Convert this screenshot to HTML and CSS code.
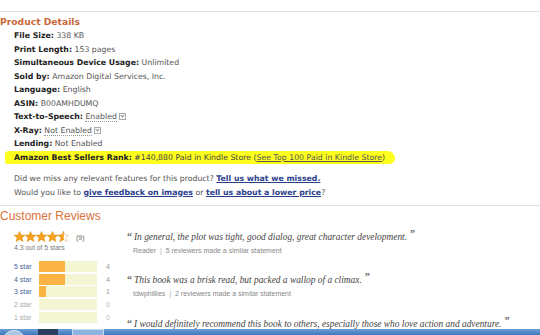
FILE: index.html
```html
<!DOCTYPE html>
<html lang="en">
<head>
    <meta charset="UTF-8">
    <title>Product Details</title>
    <link rel="stylesheet" href="styles.css">
</head>
<body>
    <div class="page">
        <div class="rule"></div>
        <h2 class="heading">Product Details</h2>
        <ul class="details">
            <li><b>File Size:</b> 338 KB</li>
            <li><b>Print Length:</b> 153 pages</li>
            <li><b>Simultaneous Device Usage:</b> Unlimited</li>
            <li><b>Sold by:</b> Amazon Digital Services, Inc.</li>
            <li><b>Language:</b> English</li>
            <li><b>ASIN:</b> B00AMHDUMQ</li>
            <li><b>Text-to-Speech:</b> <span class="dotted">Enabled</span> <span class="pop"></span></li>
            <li><b>X-Ray:</b> <span class="dotted">Not Enabled</span> <span class="pop"></span></li>
            <li><b>Lending:</b> Not Enabled</li>
            <li class="rank"><span class="marker"><b>Amazon Best Sellers Rank:</b> #140,880 Paid in Kindle Store (<a href="#">See Top 100 Paid in Kindle Store</a>)</span></li>
        </ul>
        <div class="feedback">
            <p>Did we miss any relevant features for this product? <a class="strong" href="#">Tell us what we missed.</a></p>
            <p>Would you like to <a class="strong" href="#">give feedback on images</a> or <a class="strong" href="#">tell us about a lower price</a>?</p>
        </div>
        <div class="rule rule-mid"></div>
        <h2 class="heading heading-big">Customer Reviews</h2>
        <div class="reviews">
            <div class="summary">
                <div class="stars-line">
                    <svg class="stars" width="58" height="12" viewBox="0 0 58 12">
                        <defs>
                            <path id="st" d="M5.5 0.4 L7 4 L10.9 4.2 L7.9 6.7 L8.9 10.6 L5.5 8.4 L2.1 10.6 L3.1 6.7 L0.1 4.2 L4 4 Z"/>
                            <clipPath id="half"><rect x="0" y="0" width="5.8" height="12"/></clipPath>
                        </defs>
                        <use href="#st" x="0" fill="#f5a21e" stroke="#d98500" stroke-width="0.5"/>
                        <use href="#st" x="11" fill="#f5a21e" stroke="#d98500" stroke-width="0.5"/>
                        <use href="#st" x="22" fill="#f5a21e" stroke="#d98500" stroke-width="0.5"/>
                        <use href="#st" x="33" fill="#f5a21e" stroke="#d98500" stroke-width="0.5"/>
                        <g transform="translate(44 0)">
                            <use href="#st" fill="#fff" stroke="#d9b070" stroke-width="0.5"/>
                            <use href="#st" fill="#f5a21e" stroke="#d98500" stroke-width="0.5" clip-path="url(#half)"/>
                        </g>
                    </svg>
                    <span class="count">(9)</span>
                </div>
                <div class="avg">4.3 out of 5 stars</div>
                <div class="histogram">
                    <div class="hrow"><span class="hlabel">5 star</span><span class="bar"><span class="fill" style="width: 44%"></span></span><span class="hnum">4</span></div>
                    <div class="hrow"><span class="hlabel">4 star</span><span class="bar"><span class="fill" style="width: 44%"></span></span><span class="hnum">4</span></div>
                    <div class="hrow"><span class="hlabel">3 star</span><span class="bar"><span class="fill" style="width: 12%"></span></span><span class="hnum">1</span></div>
                    <div class="hrow off"><span class="hlabel">2 star</span><span class="bar"></span><span class="hnum">0</span></div>
                    <div class="hrow off"><span class="hlabel">1 star</span><span class="bar"></span><span class="hnum">0</span></div>
                </div>
            </div>
            <div class="quotes">
                <div class="quote">
                    <p class="qtext"><span class="qmark">&ldquo;</span>In general, the plot was tight, good dialog, great character development.<span class="qmark qend">&rdquo;</span></p>
                    <p class="byline">Reader <span class="sep">|</span> 5 reviewers made a similar statement</p>
                </div>
                <div class="quote">
                    <p class="qtext"><span class="qmark">&ldquo;</span>This book was a brisk read, but packed a wallop of a climax.<span class="qmark qend">&rdquo;</span></p>
                    <p class="byline">tdwphillies <span class="sep">|</span> 2 reviewers made a similar statement</p>
                </div>
                <div class="quote">
                    <p class="qtext"><span class="qmark">&ldquo;</span>I would definitely recommend this book to others, especially those who love action and adventure.<span class="qmark qend">&rdquo;</span></p>
                </div>
            </div>
        </div>
    </div>
    <div class="taskbar">
        <span class="orb"></span>
        <span class="task task-dark"></span>
        <span class="task task-light"></span>
    </div>
</body>
</html>
```

FILE: styles.css
```css
body {
    margin: 0;
    background: #fff;
    font-family: "DejaVu Sans", Verdana, sans-serif;
    color: #555;
}
.page {
    padding-top: 11px;
}
.rule {
    border-top: 1px solid #e2e2e2;
}
.heading {
    margin: 3px 0 0;
    font-size: 9.2px;
    line-height: 14px;
    font-weight: bold;
    color: #c8683a;
}
.heading-big {
    margin-top: 2px;
    font-family: "Liberation Sans", Arial, sans-serif;
    font-weight: normal;
    font-size: 12px;
    line-height: 16px;
    color: #d7733a;
}
.details {
    list-style: none;
    margin: 0;
    padding: 0 0 0 14px;
    font-size: 7.8px;
    line-height: 13.5px;
}
.details b {
    color: #222;
}
.dotted {
    border-bottom: 1px dotted #999;
}
.pop {
    display: inline-block;
    width: 5px;
    height: 5px;
    border: 1px solid #aaa;
    vertical-align: -1px;
    position: relative;
}
.pop::after {
    content: "";
    position: absolute;
    left: 1px;
    top: 0;
    width: 2px;
    height: 2px;
    border-right: 1px solid #888;
    border-bottom: 1px solid #888;
    transform: rotate(45deg);
}
.marker {
    margin-left: -9px;
    padding: 2px 10px 2px 9px;
    background: #ffff1e;
    border-radius: 4px 8px 6px 3px;
    color: #444;
}
.marker a {
    color: #555;
}
.feedback {
    margin-top: 8px;
    padding-left: 14px;
    font-size: 7.8px;
    line-height: 13.7px;
}
.feedback p {
    margin: 0;
}
.strong {
    color: #2b3e8c;
    font-weight: bold;
}
.rule-mid {
    margin-top: 6px;
}
.reviews {
    display: flex;
    padding-left: 14px;
}
.summary {
    width: 113px;
    font-family: "Liberation Sans", Arial, sans-serif;
}
.stars-line {
    display: flex;
    align-items: center;
    gap: 4px;
    margin-top: 7px;
    height: 12px;
}
.count {
    font-size: 7px;
    color: #666;
}
.avg {
    font-size: 6.8px;
    line-height: 10px;
    color: #777;
}
.histogram {
    margin-top: 7px;
}
.hrow {
    display: flex;
    align-items: center;
    height: 12.6px;
    font-size: 7px;
}
.hlabel {
    width: 25px;
    color: #4a5f9c;
}
.bar {
    width: 58px;
    height: 11px;
    background: #f4f5d2;
    display: flex;
}
.fill {
    background: #fbb443;
}
.hnum {
    margin-left: 9px;
    color: #999;
}
.off .hlabel {
    color: #aaa;
}
.off .hnum {
    color: #bbb;
}
.quotes {
    padding-top: 6.5px;
}
.quote {
    height: 25px;
    margin-bottom: 18.5px;
}
.quote:last-child {
    margin-bottom: 0;
}
.qtext {
    margin: 0;
    font-family: "Liberation Serif", Georgia, serif;
    font-style: italic;
    font-size: 9.4px;
    line-height: 13px;
    color: #444;
    white-space: nowrap;
}
.qmark {
    font-style: normal;
    font-weight: bold;
    font-size: 10px;
    line-height: 0;
    color: #666;
    margin-right: 2px;
}
.qend {
    margin: 0 0 0 3px;
    position: relative;
    top: -3px;
}
.byline {
    margin: 2px 0 0 6px;
    font-family: "Liberation Sans", Arial, sans-serif;
    font-size: 7px;
    line-height: 10px;
    color: #888;
}
.sep {
    margin: 0 2px;
    color: #aaa;
}
.taskbar {
    position: fixed;
    left: 0;
    right: 0;
    bottom: 0;
    height: 6px;
    background: linear-gradient(to bottom, #6d9ed3, #3c78bf);
    display: flex;
    overflow: hidden;
}
.orb {
    width: 22px;
    height: 22px;
    margin: 1px 0 0 2px;
    border-radius: 50%;
    background: #a9c5e4;
    border: 1px solid #dbe7f3;
}
.task {
    height: 6px;
}
.task-dark {
    width: 20px;
    margin-left: 12px;
    background: #2b3f5f;
}
.task-light {
    width: 30px;
    margin-left: 14px;
    background: #8db4de;
    border: 1px solid #c9dcef;
}
```
